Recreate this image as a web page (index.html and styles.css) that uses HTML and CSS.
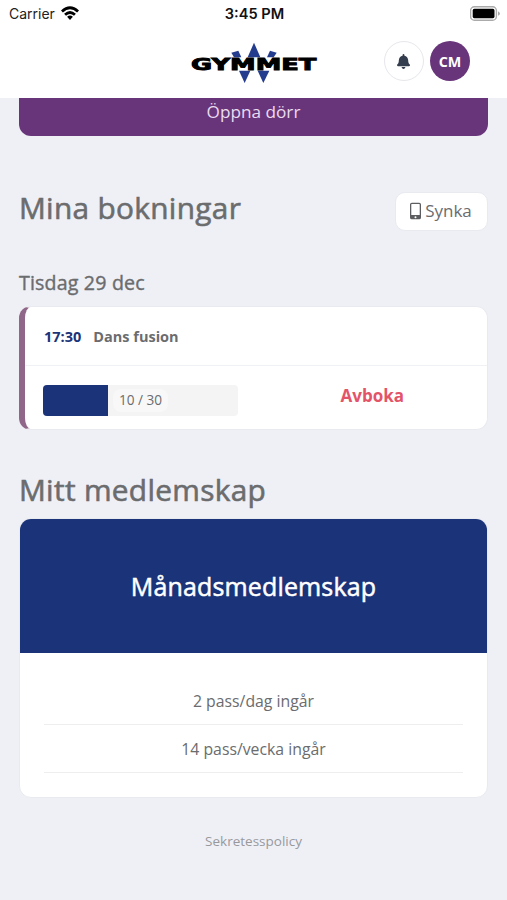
FILE: index.html
```
<!DOCTYPE html>
<html lang="sv">
<head>
<meta charset="utf-8">
<title>Gymmet</title>
<link rel="stylesheet" href="styles.css">
</head>
<body>
<header class="top">
  <div class="status">
    <div class="carrier"><span>Carrier</span>
      <svg class="wifi" viewBox="0 0 18 14"><path d="M0 4.4Q9-3.8 18 4.4L16.1 6.4Q9 .2 1.9 6.4Z"/><path d="M3.1 7.7Q9 2.3 14.9 7.7L13 9.7Q9 6.1 5 9.7Z"/><path d="M6.1 10.8Q9 8.4 11.9 10.8L9 14Z"/></svg>
    </div>
    <span class="clock">3:45 PM</span>
    <svg class="battery" viewBox="0 0 30 16"><rect x=".6" y=".8" width="25.8" height="13.4" rx="3.8" fill="#fff" stroke="#aaa" stroke-width="1.4"/><rect x="2.7" y="2.8" width="21.8" height="9.4" rx="1.6"/><path d="M28 5.2Q32 7.5 28 9.8Z" fill="#aaa"/></svg>
  </div>
  <div class="bar">
    <svg class="logo" viewBox="0 0 450 156">
      <g fill="#243c8e"><path d="M222 20L241 64H203Z"/><path d="M154 50L175 44L184 64H162Z"/><path d="M270 44L290 50L281 64H261Z"/><path d="M177 104H211L194 141Z"/><path d="M233 104H268L250 141Z"/></g>
      <text x="33" y="101" textLength="376" lengthAdjust="spacingAndGlyphs">GYMMET</text>
    </svg>
    <div class="actions">
      <div class="round bell"><svg viewBox="0 0 448 512"><path d="M224 512c35 0 64-29 64-64H160c0 35 29 64 64 64zm215-150c-19-20-55-51-55-154 0-77-54-139-128-154V32c0-18-14-32-32-32s-32 14-32 32v22C118 69 64 131 64 208c0 103-36 134-55 154-6 7-9 14-9 22 0 16 13 32 32 32h384c19 0 32-16 32-32 0-8-3-15-9-22z"/></svg></div>
      <div class="round avatar">CM</div>
    </div>
  </div>
</header>
<main>
  <div class="door"><span>Öppna dörr</span></div>
  <div class="heading">
    <h1>Mina bokningar</h1>
    <div class="sync"><svg viewBox="0 0 12 18"><path fill-rule="evenodd" d="M2 0H10Q12 0 12 2V16Q12 18 10 18H2Q0 18 0 16V2Q0 0 2 0ZM2 1.4Q1.4 1.4 1.4 2V13.4H10.6V2Q10.6 1.4 10 1.4ZM6 14.6A1 1 0 1 0 6 16.8A1 1 0 1 0 6 14.6Z"/></svg><span>Synka</span></div>
  </div>
  <h2>Tisdag 29 dec</h2>
  <section class="booking">
    <div class="title"><span class="time">17:30</span><span class="name">Dans fusion</span></div>
    <div class="details">
      <div class="meter"><div class="fill"></div><span class="count">10 / 30</span></div>
      <span class="cancel">Avboka</span>
    </div>
  </section>
  <h1 class="member-heading">Mitt medlemskap</h1>
  <section class="member">
    <div class="plan"><span>Månadsmedlemskap</span></div>
    <ul><li><span>2 pass/dag ingår</span></li><li><span>14 pass/vecka ingår</span></li></ul>
  </section>
  <footer><span>Sekretesspolicy</span></footer>
</main>
</body>
</html>
```
FILE: styles.css
```
* { box-sizing: border-box; }
body {
  margin: 0;
  height: 900px;
  overflow: hidden;
  background: #eff0f6;
  color: #6b6c6e;
  font-family: "Open Sans", sans-serif;
}
.top { height: 98px; background: #fff; }
.status {
  height: 28px;
  padding: 0 7px 0 9px;
  display: grid;
  grid-template-columns: 1fr auto 1fr;
  align-items: center;
  font: 14px/28px Inter, sans-serif;
  color: #222;
}
.carrier { display: flex; align-items: center; gap: 6px; }
.wifi { width: 18px; height: 14px; fill: #000; margin-top: -2px; }
.clock { font-size: 14.6px; font-weight: 600; color: #111; }
.battery { width: 30px; height: 16px; justify-self: end; margin-top: -1px; }
.bar {
  height: 70px;
  padding: 8px 37px 0 180px;
  display: flex;
  justify-content: space-between;
}
.logo { width: 150px; height: 52px; }
.logo text {
  font: 700 45px "DejaVu Sans", sans-serif;
  stroke: #000;
  stroke-width: 2.5;
}
.actions { display: flex; gap: 6px; margin-top: 5px; }
.round {
  width: 40px;
  height: 40px;
  border-radius: 50%;
  display: flex;
  align-items: center;
  justify-content: center;
}
.bell { border: 1px solid #e7e7ec; padding-right: 2px; }
.bell svg { width: 13px; height: 15px; fill: #343d4d; }
.avatar { background: #68357a; color: #fff; font-size: 14.3px; font-weight: 700; }
main { padding: 0 19px; }
.door {
  height: 38px;
  border-radius: 0 0 12px 12px;
  background: #68357a;
  color: #eadcf0;
  text-align: center;
  font-size: 17.2px;
  line-height: 28px;
}
.heading {
  margin-top: 56px;
  height: 39px;
  display: flex;
  justify-content: space-between;
}
h1 {
  margin: 0;
  font-size: 29.8px;
  font-weight: 400;
  letter-spacing: .32px;
  -webkit-text-stroke: .6px currentColor;
  line-height: 32px;
}
.sync {
  width: 93px;
  height: 39px;
  border: 1px solid #e9eaef;
  border-radius: 10px;
  background: #fff;
  display: flex;
  align-items: center;
  justify-content: center;
  gap: 4px;
  font-size: 17px;
  line-height: 36px;
  padding: 0 1px 2px 0;
}
.sync svg { width: 11px; height: 18px; fill: #5c5d60; }
h2 {
  margin: 38px 0 0;
  height: 37px;
  font-size: 19.6px;
  font-weight: 400;
  letter-spacing: .17px;
  -webkit-text-stroke: .4px currentColor;
  line-height: 28px;
}
.booking {
  height: 124px;
  border: 1px solid #e9eaef;
  border-left: 6px solid #916789;
  border-radius: 12px;
  background: #fff;
}
.title {
  height: 59px;
  padding-left: 19px;
  border-bottom: 1px solid #f0f1f5;
  display: flex;
  align-items: center;
  gap: 12px;
  font-size: 14.5px;
  font-weight: 700;
}
.time { color: #1b3479; }
.details {
  height: 63px;
  padding: 19px 83px 0 18px;
  display: flex;
  justify-content: space-between;
}
.meter {
  width: 195px;
  height: 31px;
  border-radius: 4px;
  background: #f4f4f4;
  overflow: hidden;
  display: flex;
}
.fill { width: 65px; background: #1b3479; }
.count {
  height: 23px;
  margin: 4px 0 0 5px;
  padding: 0 6px;
  border-radius: 8px;
  background: #f8f8f8;
  font-size: 13.6px;
  line-height: 21px;
}
.cancel { color: #e45469; font-size: 17px; font-weight: 700; line-height: 22px; }
.member-heading { margin-top: 44px; height: 44px; }
.member {
  height: 280px;
  border: 1px solid #e9eaef;
  border-radius: 12px;
  overflow: hidden;
  background: #fff;
}
.plan {
  height: 134px;
  background: #1b3479;
  color: #fff;
  text-align: center;
  font-size: 25px;
  font-weight: 400;
  letter-spacing: .15px;
  -webkit-text-stroke: .5px currentColor;
  line-height: 135px;
}
ul { margin: 24px 24px 0; padding: 0; list-style: none; }
li {
  height: 48px;
  border-bottom: 1px solid #eeeef0;
  text-align: center;
  font-size: 15.8px;
  line-height: 48px;
}
footer { padding-top: 32px; text-align: center; font-size: 13.5px; line-height: 22px; color: #98999d; }
```
